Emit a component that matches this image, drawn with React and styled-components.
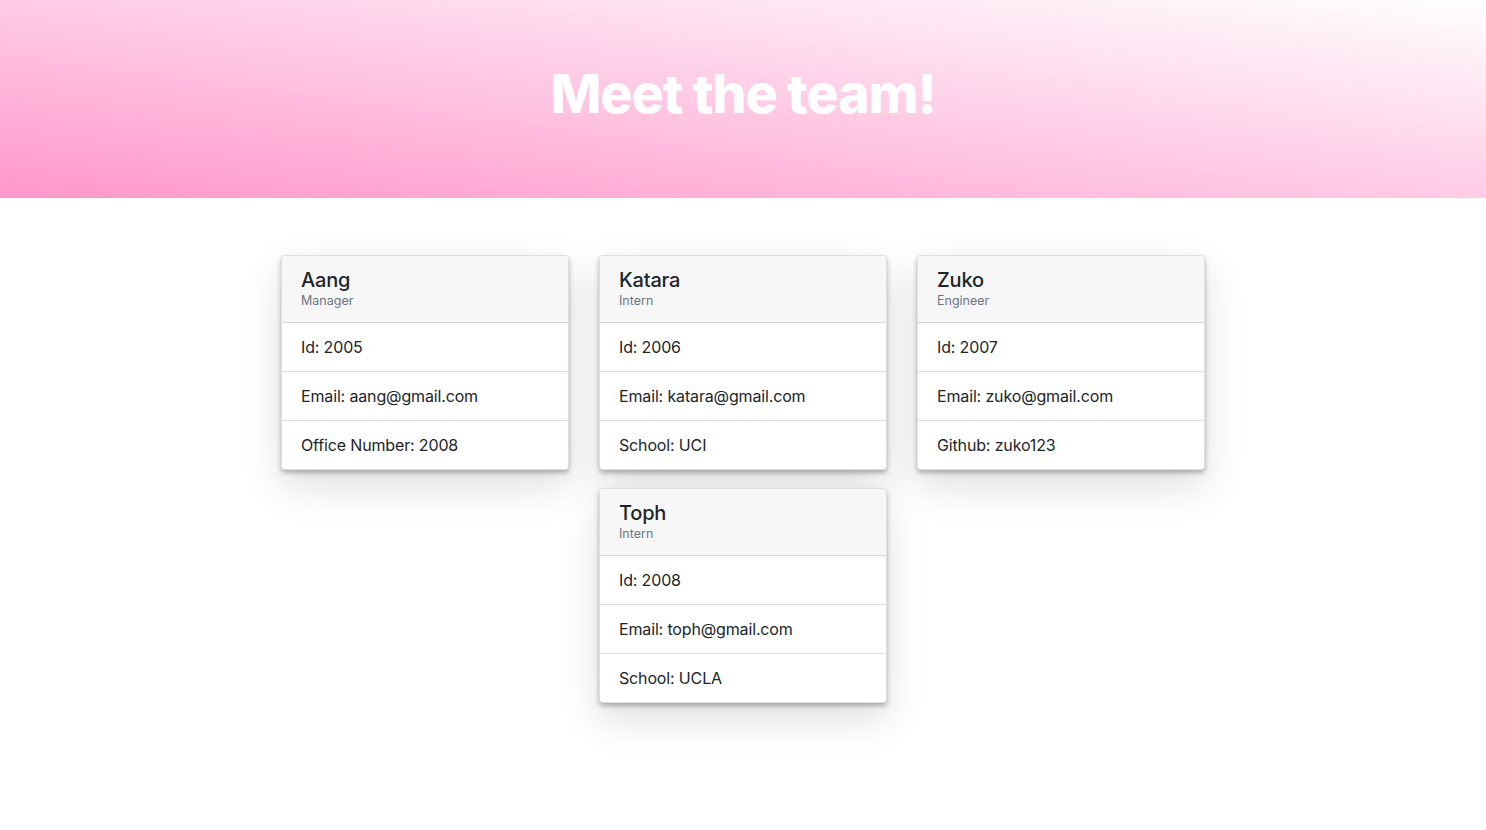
import { createGlobalStyle, styled } from "styled-components";

const GlobalStyle = createGlobalStyle`
  body {
    margin: 0;
    font-family: Inter, "Noto Sans", sans-serif;
    color: #212529;
    background: #fff;
  }
`;

const Hero = styled.header`
  height: 198px;
  display: flex;
  align-items: center;
  justify-content: center;
  background: linear-gradient(to top right, #ff97cb 0%, #ffc6e3 45%, #ffffff 100%);
`;

const Title = styled.h1`
  margin: 0;
  padding-bottom: 12px;
  color: #fff;
  font-size: 54px;
  font-weight: 800;
  letter-spacing: -1.2px;
`;

const Grid = styled.main`
  display: flex;
  flex-wrap: wrap;
  justify-content: center;
  gap: 18px 30px;
  max-width: 924px;
  margin: 57px auto 0;
  padding-bottom: 80px;
`;

const Card = styled.div`
  width: 288px;
  box-sizing: border-box;
  background: #fff;
  border: 1px solid rgba(0, 0, 0, 0.125);
  border-radius: 4px;
  overflow: hidden;
  box-shadow: 0 3px 5px rgba(0, 0, 0, 0.28), 0 16px 40px rgba(0, 0, 0, 0.13);
`;

const CardHeader = styled.div`
  background: #f7f7f7;
  padding: 12px 19px 12px;
  border-bottom: 1px solid rgba(0, 0, 0, 0.125);
`;

const Name = styled.h5`
  margin: 0;
  font-size: 20px;
  font-weight: 500;
  line-height: 24px;
  letter-spacing: -0.2px;
`;

const Role = styled.div`
  font-size: 12.5px;
  line-height: 18px;
  color: #6c757d;
`;

const Item = styled.div`
  padding: 12px 19px;
  font-size: 16px;
  line-height: 24px;
  letter-spacing: -0.15px;
  & + & {
    border-top: 1px solid rgba(0, 0, 0, 0.125);
  }
`;

const team = [
  { name: "Aang", role: "Manager", id: 2005, email: "aang@gmail.com", extra: "Office Number: 2008" },
  { name: "Katara", role: "Intern", id: 2006, email: "katara@gmail.com", extra: "School: UCI" },
  { name: "Zuko", role: "Engineer", id: 2007, email: "zuko@gmail.com", extra: "Github: zuko123" },
  { name: "Toph", role: "Intern", id: 2008, email: "toph@gmail.com", extra: "School: UCLA" },
];

export default function App() {
  return (
    <>
      <GlobalStyle />
      <Hero>
        <Title>Meet the team!</Title>
      </Hero>
      <Grid>
        {team.map((m) => (
          <Card key={m.id}>
            <CardHeader>
              <Name>{m.name}</Name>
              <Role>{m.role}</Role>
            </CardHeader>
            <Item>Id: {m.id}</Item>
            <Item>Email: {m.email}</Item>
            <Item>{m.extra}</Item>
          </Card>
        ))}
      </Grid>
    </>
  );
}
